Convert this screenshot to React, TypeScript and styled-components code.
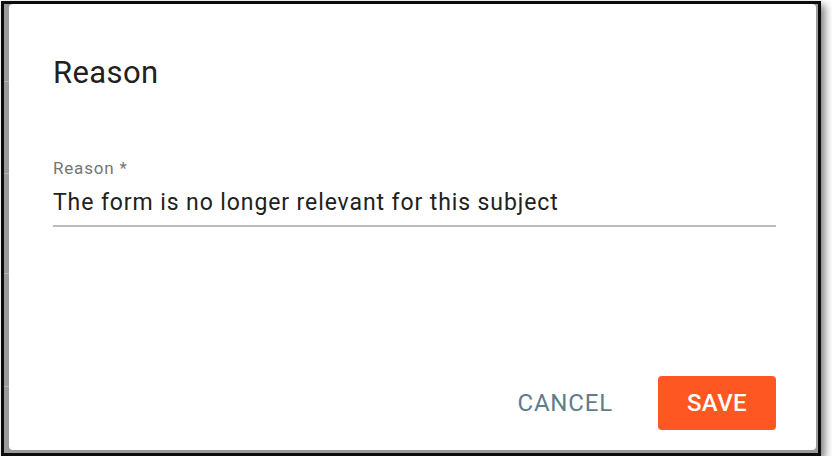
import React from 'react';
import styled, { createGlobalStyle } from 'styled-components';

const GlobalStyle = createGlobalStyle`
  html, body {
    margin: 0;
    padding: 0;
    background: #ffffff;
    font-family: Roboto, "Liberation Sans", Arial, sans-serif;
  }
`;

const Frame = styled.div`
  margin: 1px 0 0 1px;
  width: 814px;
  height: 449px;
  border: 3px solid #0c0c0c;
  box-shadow: 4px 4px 8px rgba(0, 0, 0, 0.5);
  display: flex;
`;

const Backdrop = styled.div`
  flex: 1;
  display: flex;
  background: #9b9b9b;
  padding: 0 2px 3px 0;
`;

const PageEdge = styled.div`
  width: 5px;
  display: flex;
  flex-direction: column;
  overflow: hidden;
`;

const EdgeRow = styled.div<{ $h: number }>`
  height: ${(p) => p.$h}px;
  border-bottom: 1px solid #b3b3b3;
  box-sizing: border-box;
`;

const Dialog = styled.div`
  flex: 1;
  background: #ffffff;
  border-radius: 4px;
  padding: 51px 40px 20px 44px;
  display: flex;
  flex-direction: column;
`;

const Title = styled.h2`
  margin: 0;
  font-size: 31px;
  line-height: 36px;
  letter-spacing: 0.4px;
  font-weight: 400;
  color: #212121;
`;

const Field = styled.div`
  margin-top: 67px;
  padding-bottom: 8px;
  border-bottom: 2px solid #bdbdbd;
  display: flex;
  flex-direction: column;
  gap: 10px;
`;

const Label = styled.label`
  font-size: 17px;
  line-height: 20px;
  letter-spacing: 0.8px;
  color: #757575;
`;

const Value = styled.div`
  font-size: 23px;
  line-height: 29px;
  letter-spacing: 0.9px;
  color: #212121;
`;

const Actions = styled.div`
  margin-top: auto;
  display: flex;
  justify-content: flex-end;
  align-items: center;
  gap: 25px;
`;

const Button = styled.button<{ $primary?: boolean }>`
  height: 54px;
  border: none;
  border-radius: 4px;
  padding: 0 ${(p) => (p.$primary ? 29 : 20)}px;
  font-family: Roboto, "Liberation Sans", Arial, sans-serif;
  font-size: 24px;
  letter-spacing: ${(p) => (p.$primary ? 0.4 : 0.8)}px;
  font-weight: ${(p) => (p.$primary ? 500 : 400)};
  background: ${(p) => (p.$primary ? '#ff5722' : 'transparent')};
  color: ${(p) => (p.$primary ? '#ffffff' : '#607d8b')};
  cursor: pointer;
`;

export default function App() {
  return (
    <>
      <GlobalStyle />
      <Frame>
        <Backdrop>
          <PageEdge>
            <EdgeRow $h={78} />
            <EdgeRow $h={92} />
            <EdgeRow $h={100} />
            <EdgeRow $h={113} />
          </PageEdge>
          <Dialog>
            <Title>Reason</Title>
            <Field>
              <Label>Reason *</Label>
              <Value>The form is no longer relevant for this subject</Value>
            </Field>
            <Actions>
              <Button>CANCEL</Button>
              <Button $primary>SAVE</Button>
            </Actions>
          </Dialog>
        </Backdrop>
      </Frame>
    </>
  );
}
